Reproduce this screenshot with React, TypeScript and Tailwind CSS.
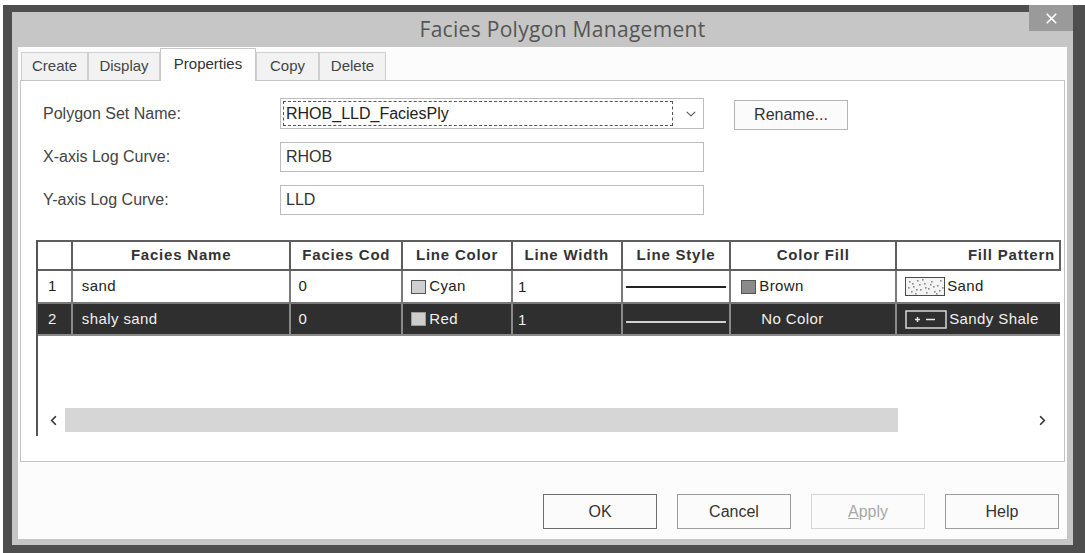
import { ChevronDown, ChevronLeft, ChevronRight, X } from "lucide-react";

type Facies = {
  id: number;
  name: string;
  code: string;
  lineColor: { label: string; swatch: string };
  lineWidth: string;
  fill: { label: string; swatch?: string };
  pattern: "sand" | "sandyShale";
  patternLabel: string;
  selected?: boolean;
};

const rows: Facies[] = [
  {
    id: 1,
    name: "sand",
    code: "0",
    lineColor: { label: "Cyan", swatch: "#cfcfcf" },
    lineWidth: "1",
    fill: { label: "Brown", swatch: "#8a8a8a" },
    pattern: "sand",
    patternLabel: "Sand",
  },
  {
    id: 2,
    name: "shaly sand",
    code: "0",
    lineColor: { label: "Red", swatch: "#cdcdcd" },
    lineWidth: "1",
    fill: { label: "No Color" },
    pattern: "sandyShale",
    patternLabel: "Sandy Shale",
    selected: true,
  },
];

const headers = [
  { label: "", w: "w-[34px]" },
  { label: "Facies Name", w: "w-[220px]" },
  { label: "Facies Cod", w: "w-[112px]" },
  { label: "Line Color", w: "w-[110px]" },
  { label: "Line Width", w: "w-[110px]" },
  { label: "Line Style", w: "w-[109px]" },
  { label: "Color Fill", w: "w-[167px]" },
  { label: "Fill Pattern", w: "w-[164px]" },
];

// speckle dots for the sand fill swatch
const sandDots = [
  [3, 4], [7, 9], [11, 3], [14, 12], [5, 14], [18, 6], [22, 11], [25, 4], [28, 14],
  [31, 8], [34, 3], [9, 16], [16, 2], [20, 15], [27, 9], [33, 13], [2, 10], [13, 7],
  [24, 7], [30, 16], [6, 6], [36, 10], [19, 10], [10, 12],
];

function PatternSwatch({ kind, dark }: { kind: Facies["pattern"]; dark?: boolean }) {
  if (kind === "sand") {
    return (
      <svg width="40" height="19" viewBox="0 0 40 19" className="shrink-0">
        <rect x="0.5" y="0.5" width="39" height="18" fill="#f4f4f4" stroke="#4a4a4a" />
        {sandDots.map(([x, y], i) => (
          <rect key={i} x={x + 1} y={y} width="1.6" height="1.6" fill="#8a8a8a" />
        ))}
      </svg>
    );
  }
  return (
    <svg width="42" height="19" viewBox="0 0 42 19" className="shrink-0">
      <rect x="1" y="1" width="40" height="17" fill="none" stroke={dark ? "#d8d8d8" : "#444"} strokeWidth="1.5" />
      <path d="M10 9.5h5M12.5 7v5M21 9.5h9" stroke={dark ? "#e8e8e8" : "#444"} strokeWidth="1.4" />
    </svg>
  );
}

function Swatch({ color, dark }: { color: string; dark?: boolean }) {
  return (
    <span
      className={`inline-block w-[15px] h-[14px] shrink-0 border ${dark ? "border-[#9a9a9a]" : "border-[#555]"}`}
      style={{ background: color }}
    />
  );
}

function FaciesGrid() {
  return (
    <div className="ml-[15px] mr-[3px] h-[196px] border-l-2 border-[#555] flex flex-col bg-white">
      <table className="table-fixed border-collapse text-[15px] tracking-[0.4px] text-[#222]">
        <colgroup>
          {headers.map((h, i) => (
            <col key={i} className={h.w} />
          ))}
        </colgroup>
        <thead>
          <tr className="h-[29px]">
            {headers.map((h, i) => (
              <th
                key={i}
                className={`border-2 border-[#5e5e5e] border-l-0 font-bold text-[#333] tracking-[0.8px] whitespace-nowrap overflow-hidden ${
                  i === 7 ? "text-right pr-[4px]" : "text-center"
                }`}
              >
                {h.label}
              </th>
            ))}
          </tr>
        </thead>
        <tbody>
          {rows.map((r) => {
            const dark = !!r.selected;
            const cell = dark
              ? "bg-[#2f2f2f] text-[#f0f0f0] border-x-2 border-b-2 border-[#8a8a8a]"
              : "bg-white border-x-2 border-b-2 border-[#7a7a7a]";
            return (
              <tr key={r.id} className={dark ? "h-[32px]" : "h-[33px]"}>
                <td className={`${cell} border-l-0 pl-[10px]`}>{r.id}</td>
                <td className={`${cell} pl-[9px]`}>{r.name}</td>
                <td className={`${cell} pl-[7px]`}>{r.code}</td>
                <td className={`${cell} pl-[8px]`}>
                  <span className="flex items-center gap-[3px]">
                    <Swatch color={r.lineColor.swatch} dark={dark} />
                    {r.lineColor.label}
                  </span>
                </td>
                <td className={`${cell} pl-[5px] align-top pt-[5px]`}>{r.lineWidth}</td>
                <td className={`${cell} px-[3px]`}>
                  <div className={`h-[2px] ${dark ? "bg-[#d0d0d0] mt-[6px]" : "bg-[#222]"}`} />
                </td>
                <td className={`${cell} ${r.fill.swatch ? "pl-[10px]" : "pl-[30px]"}`}>
                  <span className="flex items-center gap-[3px]">
                    {r.fill.swatch && <Swatch color={r.fill.swatch} />}
                    {r.fill.label}
                  </span>
                </td>
                <td className={`${cell} border-r-0 pl-[8px]`}>
                  <span className="flex items-center gap-[2px] whitespace-nowrap">
                    <PatternSwatch kind={r.pattern} dark={dark} />
                    {r.patternLabel}
                  </span>
                </td>
              </tr>
            );
          })}
        </tbody>
      </table>
      <div className="flex-1" />
      <div className="h-[26px] mb-[3px] flex items-center">
        <div className="w-[26px] flex justify-center pl-[4px]">
          <ChevronLeft size={15} strokeWidth={2.8} className="text-[#333]" />
        </div>
        <div className="ml-[1px] w-[833px] h-[24px] bg-[#d6d6d6]" />
        <div className="flex-1" />
        <div className="w-[26px] mr-[6px] flex justify-center">
          <ChevronRight size={15} strokeWidth={2.8} className="text-[#333]" />
        </div>
      </div>
    </div>
  );
}

function TextField({ value }: { value: string }) {
  return (
    <div className="w-[424px] h-[30px] border border-[#bdbdbd] bg-white px-[5px] flex items-center text-[16px] text-[#333]">
      {value}
    </div>
  );
}

function DialogButton({ label, primary, disabled }: { label: string; primary?: boolean; disabled?: boolean }) {
  return (
    <button
      className={`w-[114px] h-[35px] text-[16px] bg-[#fbfbfb] border ${
        primary ? "border-[#6d6d6d]" : disabled ? "border-[#d4d4d4]" : "border-[#9c9c9c]"
      } ${disabled ? "text-[#a8a8a8]" : "text-[#333]"}`}
    >
      {label === "Apply" ? (
        <span>
          <span className="underline">A</span>pply
        </span>
      ) : (
        label
      )}
    </button>
  );
}

export default function App() {
  const tabs = [
    { label: "Create", w: "w-[67px]" },
    { label: "Display", w: "w-[72px]" },
    { label: "Properties", w: "w-[96px]", active: true },
    { label: "Copy", w: "w-[63px]" },
    { label: "Delete", w: "w-[67px]" },
  ];

  return (
    <div className="w-[1085px] h-[553px] bg-white pt-[5px] pl-[3px] overflow-hidden font-['Liberation_Sans',Arial,sans-serif]">
      <div className="relative w-[1082px] h-[548px] bg-[#4e4e4e] pt-[7px] pl-[9px] pr-[12px] pb-[8px]">
        <div className="h-full bg-[#c6c6c6] flex flex-col px-[6px] pb-[6px]">
          {/* title bar */}
          <div className="h-[35px] shrink-0 flex items-center justify-center pl-[40px]">
            <span className="font-['Open_Sans',sans-serif] text-[21px] text-[#555] tracking-[0.3px]">
              Facies Polygon Management
            </span>
          </div>

          {/* client area */}
          <div className="flex-1 bg-[#fcfcfc] flex flex-col">
            <div className="h-[33px] pt-[1px] pl-[3px] flex items-end">
              {tabs.map((t) =>
                t.active ? (
                  <div
                    key={t.label}
                    className={`${t.w} h-[33px] bg-white border border-b-0 border-[#c8c8c8] -mb-[1px] relative z-10 flex items-start justify-center pt-[4px] text-[15px] text-[#333]`}
                  >
                    {t.label}
                  </div>
                ) : (
                  <div
                    key={t.label}
                    className={`${t.w} h-[28px] bg-[#f2f2f2] border border-b-0 border-[#cfcfcf] flex items-center justify-center text-[15px] text-[#444]`}
                  >
                    {t.label}
                  </div>
                )
              )}
            </div>

            {/* properties page */}
            <div className="mx-[2px] h-[382px] border border-[#c4c4c4] bg-white pt-[17px] flex flex-col">
              <div className="pl-[22px] flex items-center h-[31px]">
                <span className="w-[237px] text-[16px] text-[#444]">Polygon Set Name:</span>
                <div className="w-[424px] h-[31px] border border-[#bdbdbd] flex items-center pl-[2px] pr-[4px]">
                  <div className="w-[392px] h-[25px] border border-dashed border-[#555] flex items-center px-[2px] text-[16px] text-[#222]">
                    RHOB_LLD_FaciesPly
                  </div>
                  <ChevronDown size={16} strokeWidth={1.6} className="ml-[10px] text-[#555]" />
                </div>
                <button className="ml-[30px] mt-[3px] w-[114px] h-[30px] border border-[#b5b5b5] bg-[#fbfbfb] text-[16px] text-[#333]">
                  Rename...
                </button>
              </div>
              <div className="pl-[22px] mt-[13px] flex items-center">
                <span className="w-[237px] text-[16px] text-[#444]">X-axis Log Curve:</span>
                <TextField value="RHOB" />
              </div>
              <div className="pl-[22px] mt-[13px] flex items-center">
                <span className="w-[237px] text-[16px] text-[#444]">Y-axis Log Curve:</span>
                <TextField value="LLD" />
              </div>
              <div className="mt-[25px]">
                <FaciesGrid />
              </div>
            </div>

            <div className="mt-[32px] pr-[8px] flex justify-end gap-[20px]">
              <DialogButton label="OK" primary />
              <DialogButton label="Cancel" />
              <DialogButton label="Apply" disabled />
              <DialogButton label="Help" />
            </div>
          </div>
        </div>

        {/* close box */}
        <div className="absolute top-0 right-[12px] w-[44px] h-[26px] bg-[#9a9a9a] flex items-center justify-center">
          <X size={17} strokeWidth={2.4} className="text-white" />
        </div>
      </div>
    </div>
  );
}
